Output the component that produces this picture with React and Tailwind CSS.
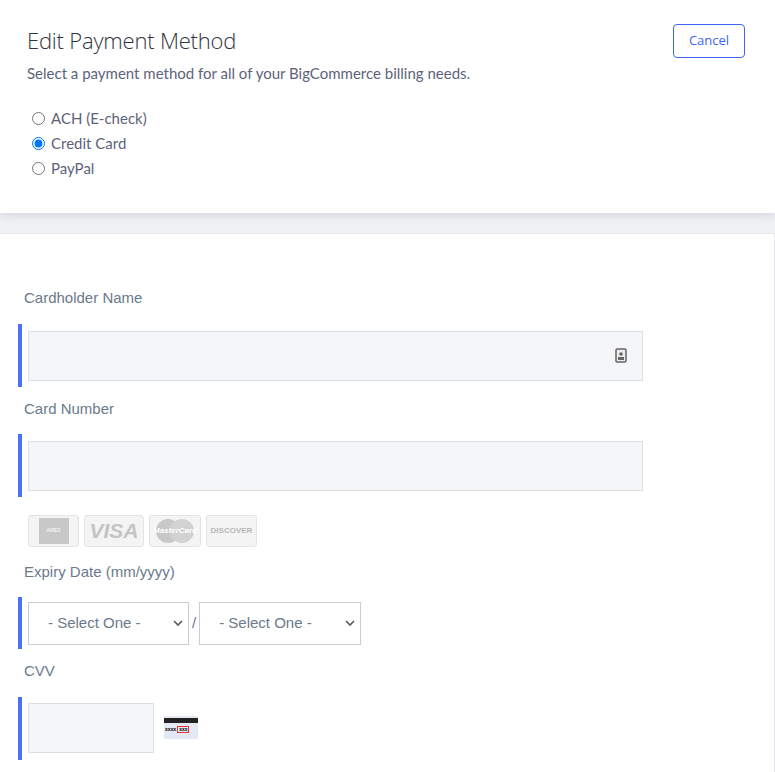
export default function App() {
  const lab = "text-[15px] text-[#6b7a8c]";
  const ff = { fontFamily: "Arial, 'Liberation Sans', sans-serif" };
  const Card = ({ children, w = 50 }) => (
    <div className="h-[32px] rounded-[3px] border border-[#e4e4e4] bg-[#f4f4f4] flex items-center justify-center" style={{ width: w }}>{children}</div>
  );
  return (
    <div className="w-[775px] h-[772px] bg-[#f0f1f5] overflow-hidden" style={{ fontFamily: "'Open Sans', sans-serif" }}>
      <div className="bg-white h-[213px] px-[27px] pt-[24px] shadow-[0_2px_10px_rgba(0,0,0,0.12)] relative">
        <div className="flex justify-between items-start">
          <h1 className="text-[22px] text-[#313440] mt-[0px] font-light tracking-[-0.2px]" style={{ fontFamily: "'Open Sans', sans-serif" }}>Edit Payment Method</h1>
          <button className="mr-[3px] w-[72px] h-[34px] border border-[#3c64f4] rounded-[4px] text-[#3c64f4] text-[13px]">Cancel</button>
        </div>
        <p className="text-[15px] text-[#5e637a] mt-[4px]" style={{ fontFamily: "Lato, sans-serif" }}>Select a payment method for all of your BigCommerce billing needs.</p>
        <div className="mt-[23px] ml-[5px] flex flex-col gap-[3px] text-[15px] text-[#5e637a]" style={{ fontFamily: "Lato, sans-serif" }}>
          {["ACH (E-check)", "Credit Card", "PayPal"].map((t, i) => (
            <label key={t} className="flex items-center gap-[6px] h-[22px]">
              <input type="radio" name="pm" defaultChecked={i === 1} className="w-[13px] h-[13px] m-0" />
              {t}
            </label>
          ))}
        </div>
      </div>
      <div className="mt-[20px] bg-white h-[540px] border-t border-r border-[#e6e8ee] pt-[53px]" style={ff}>
        <div className="pl-[24px]"><div className={lab}>Cardholder Name</div></div>
        <div className="flex mt-[14px] h-[63px]">
          <div className="ml-[18px] w-[4px] bg-[#4b71fc]" />
          <div className="ml-[6px] mt-[7px] w-[615px] h-[50px] bg-[#f5f6f8] border border-[#dcdfe4] flex items-center justify-end pr-[15px]">
            <svg width="12" height="15" viewBox="0 0 12 15"><rect x="1" y="1" width="10" height="13" rx="1" fill="#eee" stroke="#666" strokeWidth="1.5"/><circle cx="6" cy="6" r="1.8" fill="#666"/><rect x="3" y="9" width="6" height="3" fill="#666"/></svg>
          </div>
        </div>
        <div className="pl-[24px] mt-[11px]"><div className={lab}>Card Number</div></div>
        <div className="flex mt-[14px] h-[63px]">
          <div className="ml-[18px] w-[4px] bg-[#4b71fc]" />
          <div className="ml-[6px] mt-[7px] w-[615px] h-[50px] bg-[#f5f6f8] border border-[#dcdfe4]" />
        </div>
        <div className="flex gap-[5px] ml-[28px] mt-[18px]">
          <Card w={51}><div className="w-[30px] h-[26px] bg-[#c8c8c8] text-[5px] text-white flex items-center justify-center">AMEX</div></Card>
          <Card w={60}><span className="text-[21px] font-black italic text-[#c4c4c4]">VISA</span></Card>
          <Card w={52}><div className="relative w-[44px] h-[26px] flex items-center justify-center"><div className="absolute left-[3px] w-[24px] h-[24px] rounded-full bg-[#c8c8c8]" /><div className="absolute right-[3px] w-[24px] h-[24px] rounded-full bg-[#d2d2d2]" /><span className="relative text-[8px] italic font-bold text-white">MasterCard</span></div></Card>
          <Card w={51}><span className="text-[8px] font-bold text-[#b8b8b8]">DISCOVER</span></Card>
        </div>
        <div className="pl-[24px] mt-[14px]"><div className={lab}>Expiry Date (mm/yyyy)</div></div>
        <div className="flex mt-[13px] h-[52px]">
          <div className="ml-[18px] w-[4px] bg-[#4b71fc]" />
          <div className="ml-[6px] mt-[5px] flex items-center h-[43px]">
            <div className="w-[161px] h-[43px] border border-[#c9cdd3] flex items-center justify-between pl-[19px] pr-[5px] text-[15px] text-[#6b7a8c]">- Select One -<svg width="10" height="6" viewBox="0 0 10 6"><path d="M1 1l4 4 4-4" stroke="#555" strokeWidth="1.6" fill="none"/></svg></div>
            <span className="mx-[3px] text-[15px] text-[#6b7a8c]">/</span>
            <div className="w-[162px] h-[43px] border border-[#c9cdd3] flex items-center justify-between pl-[19px] pr-[5px] text-[15px] text-[#6b7a8c]">- Select One -<svg width="10" height="6" viewBox="0 0 10 6"><path d="M1 1l4 4 4-4" stroke="#555" strokeWidth="1.6" fill="none"/></svg></div>
          </div>
        </div>
        <div className="pl-[24px] mt-[11px]"><div className={lab}>CVV</div></div>
        <div className="flex mt-[15px] h-[63px]">
          <div className="ml-[18px] w-[4px] bg-[#4b71fc]" />
          <div className="ml-[6px] mt-[6px] w-[126px] h-[50px] bg-[#f5f6f8] border border-[#dcdfe4]" />
          <div className="ml-[10px] mt-[19px] w-[34px] h-[23px] rounded-[2px] bg-[#e4e8f4] overflow-hidden flex flex-col">
            <div className="h-[5px] mt-[2px] bg-[#222]" />
            <div className="flex items-center gap-[1px] mt-[3px] pl-[1px] text-[5px] leading-none font-bold">
              <span>xxxx</span><span className="border border-[#e33] px-[1px]">xxx</span>
            </div>
          </div>
        </div>
      </div>
    </div>
  );
}
